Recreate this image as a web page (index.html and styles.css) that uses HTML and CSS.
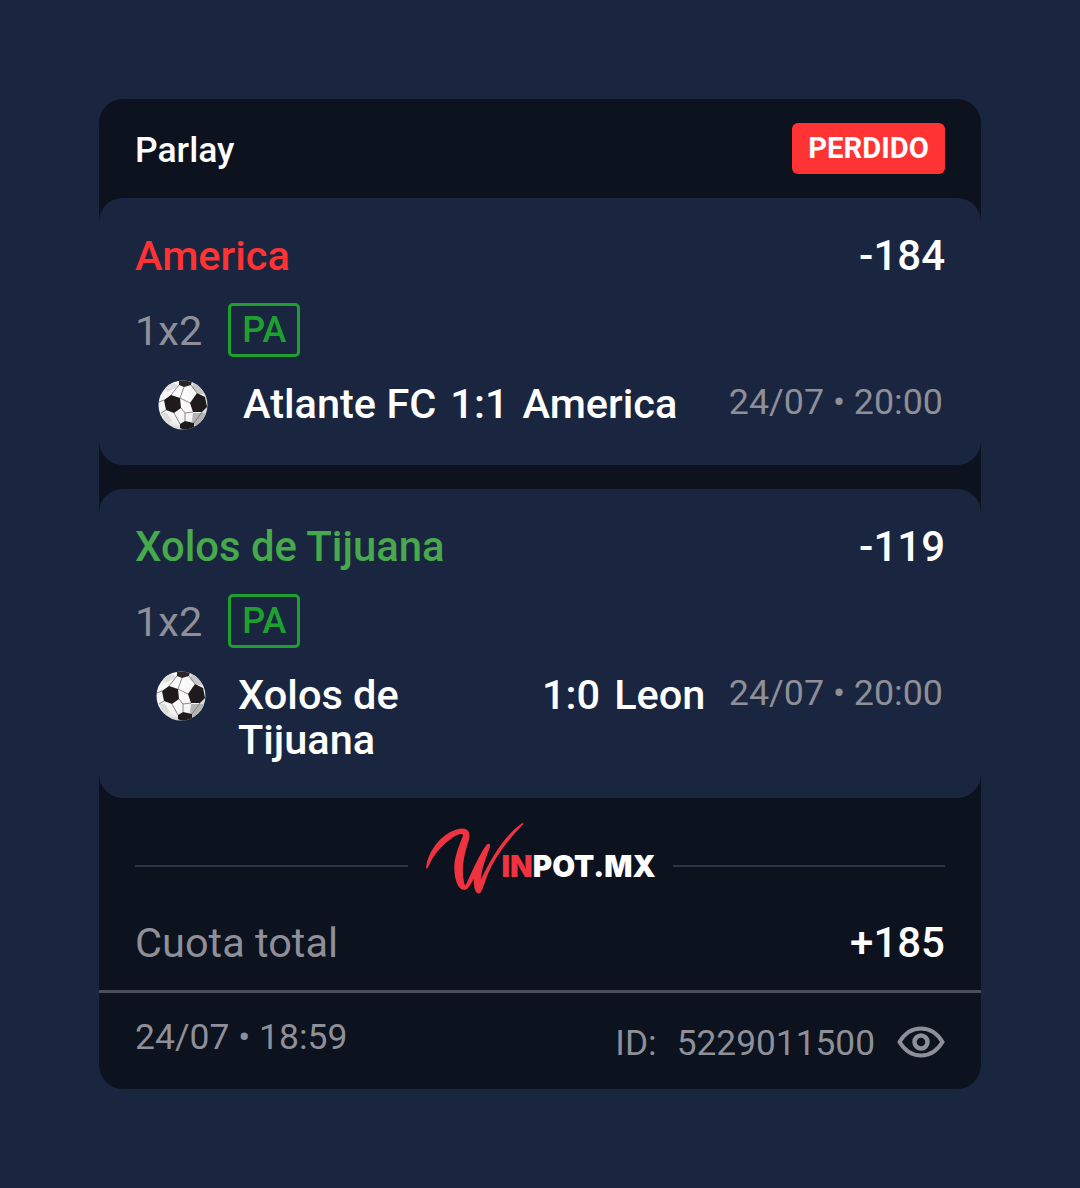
FILE: index.html
```html
<!DOCTYPE html>
<html lang="es">
<head>
<meta charset="utf-8">
<title>Parlay</title>
<link rel="stylesheet" href="styles.css">
</head>
<body>
<svg class="defs" width="0" height="0" aria-hidden="true">
  <defs>
    <clipPath id="ball-clip"><circle cx="25" cy="25" r="24.5"/></clipPath>
    <radialGradient id="ball-shade" cx="42%" cy="38%" r="68%">
      <stop offset="0" stop-color="#fff"/>
      <stop offset=".7" stop-color="#f3f3f3"/>
      <stop offset="1" stop-color="#c4c4c4"/>
    </radialGradient>
    <symbol id="ball" viewBox="0 0 50 50">
      <circle cx="25" cy="25" r="24.5" fill="url(#ball-shade)"/>
      <g clip-path="url(#ball-clip)">
        <path d="M35 3 L44 8 L48 14 L41 14 L34 8 Z" fill="#c6c6c6"/>
        <path d="M35 33 L46 33 L50 34 L44 44 L38 47 L34 41 Z" fill="#b4b4b4"/>
        <path d="M3 33 L9 33 L14 41 L10 44 Z" fill="#dcdcdc"/>
        <path d="M6 7 L14 3 L20 5 L18 8 L9 12 Z" fill="#dedede"/>
        <path d="M13 15 L22 18 L23 28 L16 33 L8 30 L6 20 Z" fill="#1f1b1c"/>
        <path d="M39 13 L47 17 L49 27 L44 32 L35 32 L32 23 Z" fill="#1f1b1c"/>
        <path d="M21 1 L27 -2 L34 1 L33 5 L26 7 L21 5 Z" fill="#2b2527"/>
        <path d="M22 44 L27 41 L36 43 L36 47 L28 51 L22 48 Z" fill="#1f1b1c"/>
        <path d="M13 15 L21 5 M22 18 L26 7 M39 13 L33 5 M22 18 L32 23 M23 28 L27 33 L35 32 M27 33 L27 41 M16 33 L22 44 M36 43 L44 32 M6 20 L1 22 M8 30 L3 33" fill="none" stroke="#6d6d70" stroke-width=".8"/>
      </g>
    </symbol>
  </defs>
</svg>

<main class="card">
  <header class="card-head">
    <span class="card-type">Parlay</span>
    <span class="status">PERDIDO</span>
  </header>

  <section class="leg">
    <div class="leg-top">
      <span class="pick pick-lost">America</span>
      <span class="odds">-184</span>
    </div>
    <div class="market">
      <span class="market-name">1x2</span>
      <span class="tag">PA</span>
    </div>
    <div class="match match-a">
      <svg class="ball"><use href="#ball"/></svg>
      <div class="teams">
        <span class="home">Atlante FC</span>
        <span class="score">1:1</span>
        <span class="away">America</span>
      </div>
      <span class="when">24/07 • 20:00</span>
    </div>
  </section>

  <section class="leg leg-next">
    <div class="leg-top">
      <span class="pick pick-won">Xolos de Tijuana</span>
      <span class="odds">-119</span>
    </div>
    <div class="market">
      <span class="market-name">1x2</span>
      <span class="tag">PA</span>
    </div>
    <div class="match match-b">
      <svg class="ball"><use href="#ball"/></svg>
      <div class="teams">
        <span class="home home-wrap">Xolos de Tijuana</span>
        <span class="score">1:0</span>
        <span class="away">Leon</span>
      </div>
      <span class="when">24/07 • 20:00</span>
    </div>
  </section>

  <div class="brand-row">
    <span class="rule"></span>
    <div class="logo">
      <svg class="logo-w" viewBox="75 30 300 220" aria-hidden="true">
        <path fill="#ef3340" stroke="#ef3340" stroke-width="5" stroke-linejoin="round" d="M80 168 C84 125 120 70 170 55 C195 47 210 55 205 80 C195 115 178 160 190 215 L196 228 C215 190 235 135 262 100 C268 95 270 100 266 110 C250 150 238 190 240 215 C270 150 310 75 368 36 C325 80 285 130 262 185 C250 215 245 240 238 243 C225 245 222 215 225 190 C215 205 205 230 195 232 C175 235 165 200 165 165 C165 130 185 90 190 75 C195 60 180 60 160 72 C125 95 95 130 80 168 Z"/>
      </svg>
      <span class="logo-text"><span class="logo-in">IN</span>POT.MX</span>
    </div>
    <span class="rule"></span>
  </div>

  <div class="total">
    <span class="total-label">Cuota total</span>
    <span class="total-value">+185</span>
  </div>

  <footer class="card-foot">
    <span class="placed">24/07 • 18:59</span>
    <div class="ticket">
      <span class="ticket-id"><span class="ticket-key">ID:</span>5229011500</span>
      <svg class="eye" viewBox="0 0 48 32" aria-hidden="true">
        <path d="M2.500 16 C8 7 15.500 2.500 24 2.500 C32.500 2.500 40 7 45.500 16 C40 25 32.500 29.500 24 29.500 C15.500 29.500 8 25 2.500 16 Z" fill="none" stroke="#8e8f98" stroke-width="4"/>
        <circle cx="24" cy="16" r="6.500" fill="none" stroke="#8e8f98" stroke-width="4.500"/>
      </svg>
    </div>
  </footer>
</main>
</body>
</html>
```

FILE: styles.css
```css
* { box-sizing: border-box; }

html, body { margin: 0; height: 100%; }

body {
  background: #1a2640;
  font-family: Roboto, "Liberation Sans", sans-serif;
  color: #fff;
  padding: 99px 99px 0;
  overflow: hidden;
}

.defs { display: block; height: 0; }

.card {
  width: 882px;
  height: 990px;
  background: #0c121e;
  border-radius: 24px;
}

.card-head {
  height: 99px;
  padding: 0 36px;
  display: flex;
  align-items: center;
  justify-content: space-between;
}

.card-type { font-size: 35.500px; font-weight: 500; line-height: 42px; padding-top: 3px; }

.status {
  width: 153px;
  height: 51px;
  background: #ff3333;
  border-radius: 6px;
  font-size: 29.200px;
  font-weight: 700;
  line-height: 51px;
  text-align: center;
}

.leg {
  background: #1a2640;
  border-radius: 24px;
  padding: 33px 36px 0;
  height: 267px;
}

.leg-next { margin-top: 24px; height: 309px; }

.leg-top {
  display: flex;
  justify-content: space-between;
  align-items: center;
  height: 48px;
}

.pick { font-size: 41.800px; font-weight: 500; }
.pick-lost { color: #ff3333; font-size: 41.500px; }
.pick-won { color: #46a94b; }
.odds { font-size: 42px; font-weight: 500; }

.market {
  display: flex;
  align-items: center;
  gap: 26px;
  margin-top: 24px;
}

.market-name { font-size: 41.500px; color: #8e8f98; }

.tag {
  width: 72px;
  height: 54px;
  border: 3px solid #1ea030;
  border-radius: 5px;
  color: #1ea030;
  font-size: 36px;
  font-weight: 500;
  line-height: 48px;
  text-align: center;
}

.match {
  display: flex;
  align-items: flex-start;
  margin-top: 23px;
}

.ball { width: 50px; height: 50px; flex: none; }
.match-a .ball { margin: 0 35px 0 23px; }
.match-b .ball { margin: 0 32px 0 21px; }

.teams {
  flex: 1;
  display: flex;
  gap: 14px;
  font-size: 41.500px;
  font-weight: 500;
  line-height: 45px;
  padding-top: 1px;
}

.home-wrap { width: 290px; flex: none; }

.when {
  font-size: 35.800px;
  line-height: 44px;
  color: #8e8f98;
  margin: 0 2px 0 0;
}

.brand-row {
  display: flex;
  align-items: center;
  padding: 0 36px;
  height: 102px;
  margin-top: 17px;
}

.rule { flex: 1; height: 2px; background: #2c3546; }

.logo {
  position: relative;
  width: 265px;
  height: 72px;
  display: flex;
  align-items: center;
  padding-left: 94px;
}

.logo-w { position: absolute; left: 17px; top: -8px; width: 100px; height: 73px; }

.logo-text {
  position: relative;
  font-family: Inter, "Open Sans", sans-serif;
  font-size: 29.500px;
  font-weight: 900;
  line-height: 34px;
  white-space: nowrap;
}

.logo-in { color: #ef3340; }

.total {
  display: flex;
  justify-content: space-between;
  align-items: center;
  padding: 0 36px;
  height: 50px;
}

.total-label { font-size: 41.500px; color: #8e8f98; }
.total-value { font-size: 42px; font-weight: 500; }

.card-foot {
  margin-top: 23px;
  border-top: 3px solid #4a4f58;
  padding: 0 36px;
  display: flex;
  justify-content: space-between;
}

.placed {
  font-size: 35.500px;
  line-height: 44px;
  color: #8e8f98;
  margin-top: 22px;
}

.ticket {
  display: flex;
  align-items: center;
  gap: 22px;
  margin-top: 28px;
  height: 44px;
}

.ticket-id { font-size: 35.300px; line-height: 44px; color: #8e8f98; }
.ticket-key { margin-right: 20px; }

.eye { width: 48px; height: 32px; flex: none; margin-bottom: 2px; }
```
